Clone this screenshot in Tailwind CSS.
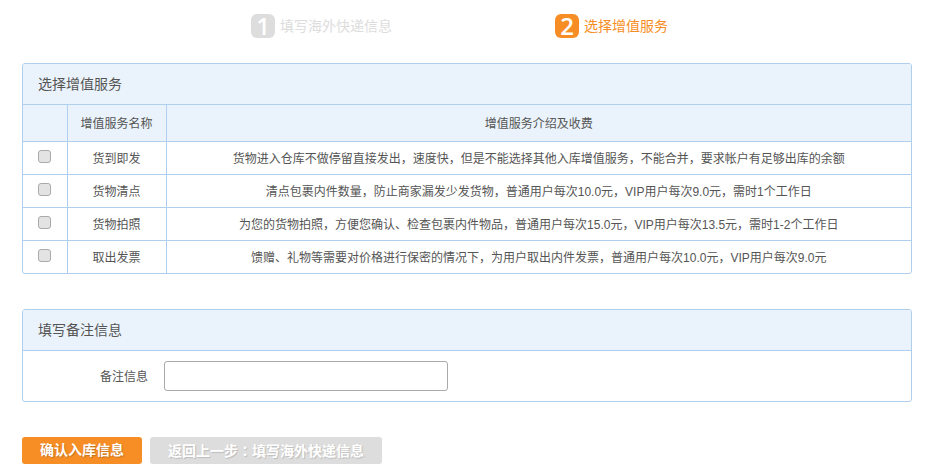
<!DOCTYPE html>
<html lang="zh-CN">
<head>
    <meta charset="UTF-8">
    <title>选择增值服务</title>
    <script src="https://cdn.jsdelivr.net/npm/@tailwindcss/browser@4"></script>
</head>
<body class="bg-white h-[472px] overflow-hidden font-['Liberation_Sans','Noto_Sans_CJK_SC',sans-serif] text-[12px] text-[#555]">
    <!-- steps -->
    <div class="h-[63px] flex pt-[14px]">
        <div class="ml-[251px] w-[304px] flex items-start">
            <span class="w-6 h-6 rounded-md bg-[#ddd] text-white text-[24px] leading-6 font-semibold text-center font-['Open_Sans',sans-serif]">1</span>
            <span class="ml-[5px] text-[14px] leading-6 text-[#ddd]">填写海外快递信息</span>
        </div>
        <div class="flex items-start">
            <span class="w-6 h-6 rounded-md bg-[#f78e25] text-white text-[24px] leading-6 font-semibold text-center font-['Open_Sans',sans-serif]">2</span>
            <span class="ml-[5px] text-[14px] leading-6 text-[#f78e25]">选择增值服务</span>
        </div>
    </div>

    <!-- services -->
    <div class="mx-[22px] w-[890px] border border-[#b0cfee] rounded-[3px] overflow-hidden">
        <div class="h-[41px] bg-[#eaf3fb] border-b border-[#b0cfee] pl-[15px] text-[14px] leading-[40px]">选择增值服务</div>
        <table class="w-full table-fixed border-collapse text-center">
            <thead class="bg-[#eaf3fb]">
                <tr class="h-[36px] border-b border-[#b0cfee]">
                    <th class="w-[44px] font-normal"></th>
                    <th class="w-[99px] pt-[2px] font-normal border-l border-[#b0cfee]">增值服务名称</th>
                    <th class="pt-[2px] font-normal border-l border-[#b0cfee]">增值服务介绍及收费</th>
                </tr>
            </thead>
            <tbody>
                <tr class="h-[33px] border-b border-[#b0cfee]">
                    <td class="align-top pt-[8px]"><input type="checkbox" class="block mx-auto w-[13px] h-[13px] appearance-none rounded-[3px] border border-[#aaa] bg-[#e3e3e3]"></td>
                    <td class="pt-[2px] border-l border-[#b0cfee]">货到即发</td>
                    <td class="pt-[2px] border-l border-[#b0cfee]">货物进入仓库不做停留直接发出，速度快，但是不能选择其他入库增值服务，不能合并，要求帐户有足够出库的余额</td>
                </tr>
                <tr class="h-[33px] border-b border-[#b0cfee]">
                    <td class="align-top pt-[8px]"><input type="checkbox" class="block mx-auto w-[13px] h-[13px] appearance-none rounded-[3px] border border-[#aaa] bg-[#e3e3e3]"></td>
                    <td class="pt-[2px] border-l border-[#b0cfee]">货物清点</td>
                    <td class="pt-[2px] border-l border-[#b0cfee]">清点包裹内件数量，防止商家漏发少发货物，普通用户每次10.0元，VIP用户每次9.0元，需时1个工作日</td>
                </tr>
                <tr class="h-[33px] border-b border-[#b0cfee]">
                    <td class="align-top pt-[8px]"><input type="checkbox" class="block mx-auto w-[13px] h-[13px] appearance-none rounded-[3px] border border-[#aaa] bg-[#e3e3e3]"></td>
                    <td class="pt-[2px] border-l border-[#b0cfee]">货物拍照</td>
                    <td class="pt-[2px] border-l border-[#b0cfee]">为您的货物拍照，方便您确认、检查包裹内件物品，普通用户每次15.0元，VIP用户每次13.5元，需时1-2个工作日</td>
                </tr>
                <tr class="h-[33px]">
                    <td class="align-top pt-[8px]"><input type="checkbox" class="block mx-auto w-[13px] h-[13px] appearance-none rounded-[3px] border border-[#aaa] bg-[#e3e3e3]"></td>
                    <td class="pt-[2px] border-l border-[#b0cfee]">取出发票</td>
                    <td class="pt-[2px] border-l border-[#b0cfee]">馈赠、礼物等需要对价格进行保密的情况下，为用户取出内件发票，普通用户每次10.0元，VIP用户每次9.0元</td>
                </tr>
            </tbody>
        </table>
    </div>

    <!-- remarks -->
    <div class="mt-[35px] mx-[22px] w-[890px] h-[93px] border border-[#b0cfee] rounded-[3px] overflow-hidden">
        <div class="h-[41px] bg-[#eaf3fb] border-b border-[#b0cfee] pl-[15px] text-[14px] leading-[40px]">填写备注信息</div>
        <div class="flex items-center pt-[10px]">
            <label class="w-[125px] pt-[2px] text-right">备注信息</label>
            <input type="text" class="ml-4 w-[284px] h-[30px] bg-white border border-[#aaa] rounded-[3px]">
        </div>
    </div>

    <!-- actions -->
    <div class="mt-[35px] ml-[22px] flex gap-2">
        <button class="w-[120px] h-[27px] rounded-[3px] bg-[#f78e25] text-white text-[14px] font-bold [text-shadow:1px_1px_1px_rgba(0,0,0,0.2)]">确认入库信息</button>
        <button class="w-[232px] h-[27px] rounded-[3px] bg-[#ddd] text-white text-[14px] font-bold [text-shadow:1px_1px_1px_rgba(0,0,0,0.15)]">返回上一步<span lang="zh-TW" class="font-['Noto_Sans_CJK_TC',sans-serif]">：</span>填写海外快递信息</button>
    </div>
</body>
</html>
